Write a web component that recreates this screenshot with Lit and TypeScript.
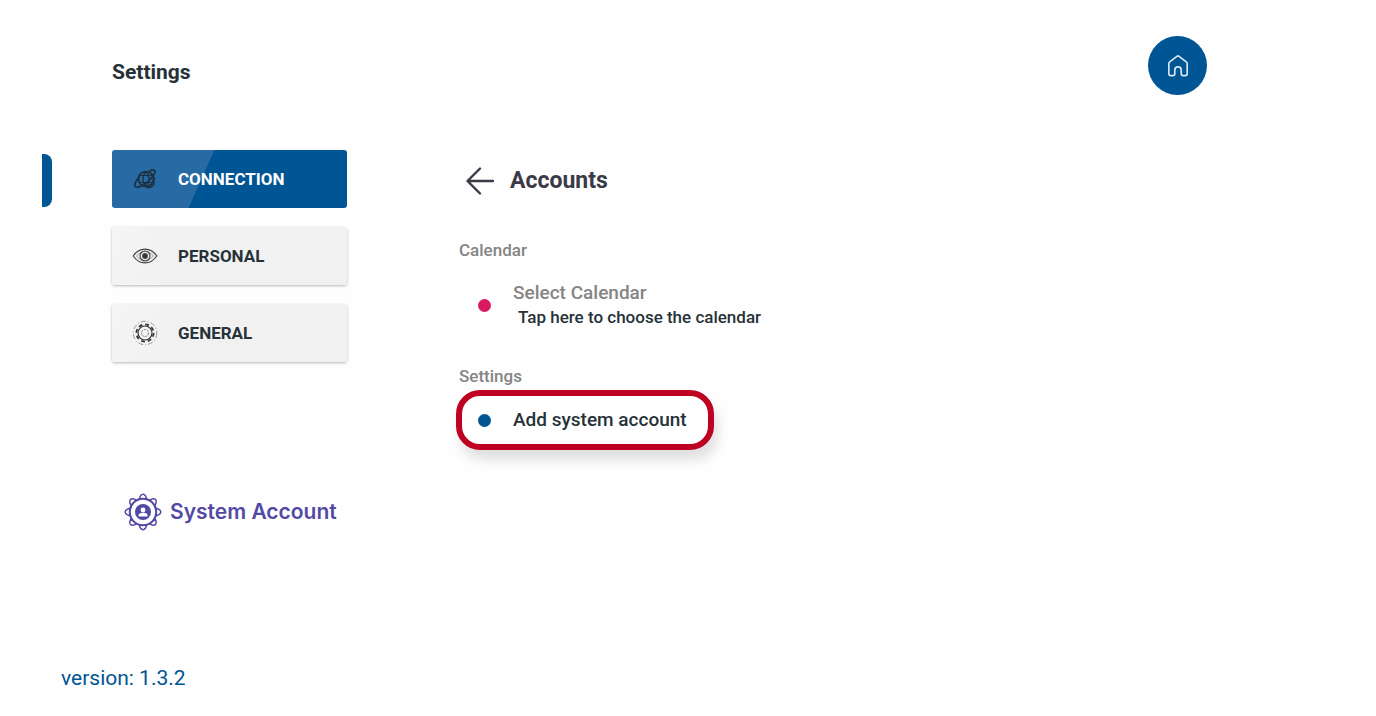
import { LitElement, html, css, svg } from "lit";
import { customElement, property, state } from "lit/decorators.js";
import { classMap } from "lit/directives/class-map.js";

type Section = { id: string; label: string };

const SECTIONS: Section[] = [
  { id: "connection", label: "CONNECTION" },
  { id: "personal", label: "PERSONAL" },
  { id: "general", label: "GENERAL" },
];

const ICONS = {
  connection: svg`
    <g fill="none" stroke="#1d3040" stroke-width="1.7">
      <circle cx="14" cy="13" r="7.500" />
      <path d="M8 9.500h12M8 16.500h12M14 5.500c-4 4-4 11 0 15M14 5.500c4 4 4 11 0 15" stroke-width="1.200" />
      <path d="M7 11C3.500 15.500 1.800 19 3.400 20.600c2.300 2 9-1.500 14.200-6.600C22 9.500 24 5.800 22.500 4.300c-1-.9-3-.2-5.200 1" />
      <path d="M22 11v7c-1.500 2.500-4.500 3.600-7.500 3.500" stroke-width="1.500" />
    </g>`,
  personal: svg`
    <g fill="none" stroke="#444" stroke-width="1.200">
      <path d="M1.200 13C7.500 3.800 18.500 3.800 24.800 13 18.500 22.200 7.500 22.200 1.200 13Z" />
      <path d="M4.500 13C9 7 17 7 21.500 13 17 19 9 19 4.500 13Z" stroke="#888" stroke-width=".8" />
      <circle cx="13" cy="13" r="5" />
      <circle cx="13" cy="13" r="2.300" fill="#333" />
    </g>`,
  general: svg`
    <g fill="none" stroke="#333">
      <circle cx="13" cy="13" r="11.800" stroke="#999" stroke-dasharray="5 2 1.200 2" />
      <circle cx="13" cy="13" r="8.600" stroke-width="1.800" stroke-dasharray="3.800 2.950" />
      <circle cx="13" cy="13" r="7" stroke-width="1.200" />
      <circle cx="13" cy="13" r="3.500" stroke="#777" stroke-dasharray="2 1" />
    </g>`,
};

const petals = Array.from({ length: 8 }, (_, i) => i * 45);

@customElement("section-button")
export class SectionButton extends LitElement {
  @property() icon = "connection";
  @property() label = "";
  @property({ type: Boolean }) active = false;

  static styles = css`
    :host {
      display: block;
    }
    .button {
      display: flex;
      align-items: center;
      gap: 20px;
      width: 100%;
      height: 58px;
      padding: 0 20px;
      border: 0;
      border-radius: 3px;
      background: linear-gradient(115deg, #f5f5f5 0, #f1f1f1 30%);
      box-shadow: 0 1px 3px rgba(0, 0, 0, 0.28);
      color: #263238;
      font: 700 17px/20px Roboto, sans-serif;
      text-align: left;
      cursor: pointer;
    }
    .active {
      background: linear-gradient(114deg, #276aa4 39%, #005595 39.500%);
      box-shadow: none;
      color: #fff;
    }
    .icon {
      width: 26px;
      height: 26px;
      flex: none;
    }
  `;

  render() {
    return html`<button
      class=${classMap({ button: true, active: this.active })}
      aria-pressed=${this.active}
    >
      <svg class="icon" viewBox="0 0 26 26" aria-hidden="true">
        ${ICONS[this.icon as keyof typeof ICONS]}
      </svg>
      ${this.label}
    </button>`;
  }
}

@customElement("app-root")
export class AppRoot extends LitElement {
  @state() private section = "connection";

  static styles = css`
    :host {
      display: flex;
      flex-direction: column;
      box-sizing: border-box;
      min-height: 100vh;
      padding: 36px 0 24px;
      background: #fefefe;
      color: #263238;
      font-family: Roboto, sans-serif;
    }
    button {
      padding: 0;
      border: 0;
      background: none;
      font: inherit;
      color: inherit;
      text-align: left;
      cursor: pointer;
    }
    h1,
    h2,
    h3 {
      margin: 0;
    }
    .header {
      display: flex;
      align-items: center;
      justify-content: space-between;
      padding: 0 169px 0 112px;
    }
    .title {
      padding-top: 12px;
      font-size: 21px;
      line-height: 24px;
      font-weight: 700;
    }
    .home {
      display: grid;
      place-items: center;
      width: 59px;
      height: 59px;
      border-radius: 50%;
      background: #005595;
    }
    .home-icon {
      width: 22px;
      height: 24px;
    }
    .body {
      display: grid;
      grid-template-columns: 10px 235px 1fr;
      column-gap: 60px;
      flex: 1;
      padding: 55px 112px 0 42px;
    }
    .marker {
      height: 53px;
      margin-top: 4px;
      border-radius: 0 8px 8px 0;
      background: #005595;
    }
    .nav {
      display: flex;
      flex-direction: column;
      gap: 19px;
    }
    .system {
      display: flex;
      align-items: center;
      gap: 8px;
      margin-top: 112px;
      padding-left: 12px;
      color: #5349a5;
      font: 600 21px/28px Inter, sans-serif;
      text-decoration: none;
      white-space: nowrap;
    }
    .system-icon {
      width: 38px;
      height: 38px;
      flex: none;
    }
    .main {
      padding: 14px 0 0 49px;
    }
    .heading {
      display: flex;
      align-items: center;
      gap: 16px;
      padding-left: 10px;
      font-size: 23px;
      line-height: 34px;
      color: #3b3a47;
    }
    .back {
      display: flex;
    }
    .back-icon {
      width: 28px;
      height: 28px;
    }
    .caption {
      padding-left: 3px;
      font-size: 17px;
      line-height: 20px;
      font-weight: 500;
      color: #858585;
    }
    .calendar {
      margin-top: 42px;
    }
    .settings {
      margin-top: 37px;
    }
    .row {
      display: flex;
      align-items: center;
      gap: 22px;
      font-size: 19px;
      line-height: 24px;
      font-weight: 500;
    }
    .dot {
      width: 13px;
      height: 13px;
      flex: none;
      border-radius: 50%;
      background: #005595;
    }
    .pink {
      background: #d81b60;
    }
    .choose {
      margin-top: 21px;
      padding-left: 22px;
    }
    .choose-text {
      display: grid;
    }
    .choose-title {
      color: #858585;
    }
    .choose-hint {
      padding-left: 5px;
      font-size: 17px;
    }
    .add {
      height: 60px;
      margin-top: 4px;
      padding: 0 21px 0 16px;
      border: 6px solid #be0023;
      border-radius: 24px;
      background: #fff;
      box-shadow: 4px 10px 12px rgba(0, 0, 0, 0.12);
    }
    .version {
      padding-left: 61px;
      font-size: 21px;
      line-height: 28px;
      color: #005595;
    }
  `;

  render() {
    return html`
      <header class="header">
        <h1 class="title">Settings</h1>
        <button class="home" aria-label="Home">
          <svg class="home-icon" viewBox="0 0 24 26" fill="none" stroke="#d9e8f3" stroke-width="1.800" stroke-linejoin="round">
            <path d="M2 10.500Q2 9.200 3 8.500L10.800 2.500Q12 1.600 13.200 2.500L21 8.500Q22 9.200 22 10.500V21.500Q22 23.500 20 23.500H17.500Q15.500 23.500 15.500 21.500V17.500Q15.500 14 12 14T8.500 17.500V21.500Q8.500 23.500 6.500 23.500H4Q2 23.500 2 21.500Z" />
          </svg>
        </button>
      </header>
      <div class="body">
        <div class="marker"></div>
        <nav class="nav" aria-label="Settings sections">
          ${SECTIONS.map(
            (s) => html`<section-button
              .icon=${s.id}
              .label=${s.label}
              .active=${s.id === this.section}
              @click=${() => (this.section = s.id)}
            ></section-button>`
          )}
          <a class="system" href="#system">
            <svg class="system-icon" viewBox="-19 -19 38 38" fill="none" stroke="#5349a5" aria-hidden="true">
              ${petals.map(
                (a) => svg`<path transform="rotate(${a})" fill="#fefefe" stroke-width="1.500" stroke-linejoin="round" d="M-3.800-13.200L-2.600-16Q0-19.600 2.600-16L3.800-13.200Z" />`
              )}
              <circle r="13.200" stroke-width="2" fill="#fefefe" />
              <circle r="8" fill="#5349a5" stroke="none" />
              <circle cy="-2" r="2.400" fill="#fff" stroke="none" />
              <path fill="#fff" stroke="none" d="M-4.500 4.500V3Q-4 1 0 .8T4.500 3V4.500Z" />
            </svg>
            System Account
          </a>
        </nav>
        <main class="main">
          <h2 class="heading">
            <button class="back" aria-label="Back">
              <svg class="back-icon" viewBox="0 0 28 28" fill="none" stroke="#3b3a47" stroke-width="2.400" stroke-linecap="round" stroke-linejoin="round">
                <path d="M27 14H2M14 1.500L1.500 14L14 26.500" />
              </svg>
            </button>
            Accounts
          </h2>
          <h3 class="caption calendar">Calendar</h3>
          <button class="row choose">
            <span class="dot pink"></span>
            <span class="choose-text">
              <span class="choose-title">Select Calendar</span>
              <span class="choose-hint">Tap here to choose the calendar</span>
            </span>
          </button>
          <h3 class="caption settings">Settings</h3>
          <button class="row add"><span class="dot"></span>Add system account</button>
        </main>
      </div>
      <footer class="version">version: 1.3.2</footer>
    `;
  }
}
